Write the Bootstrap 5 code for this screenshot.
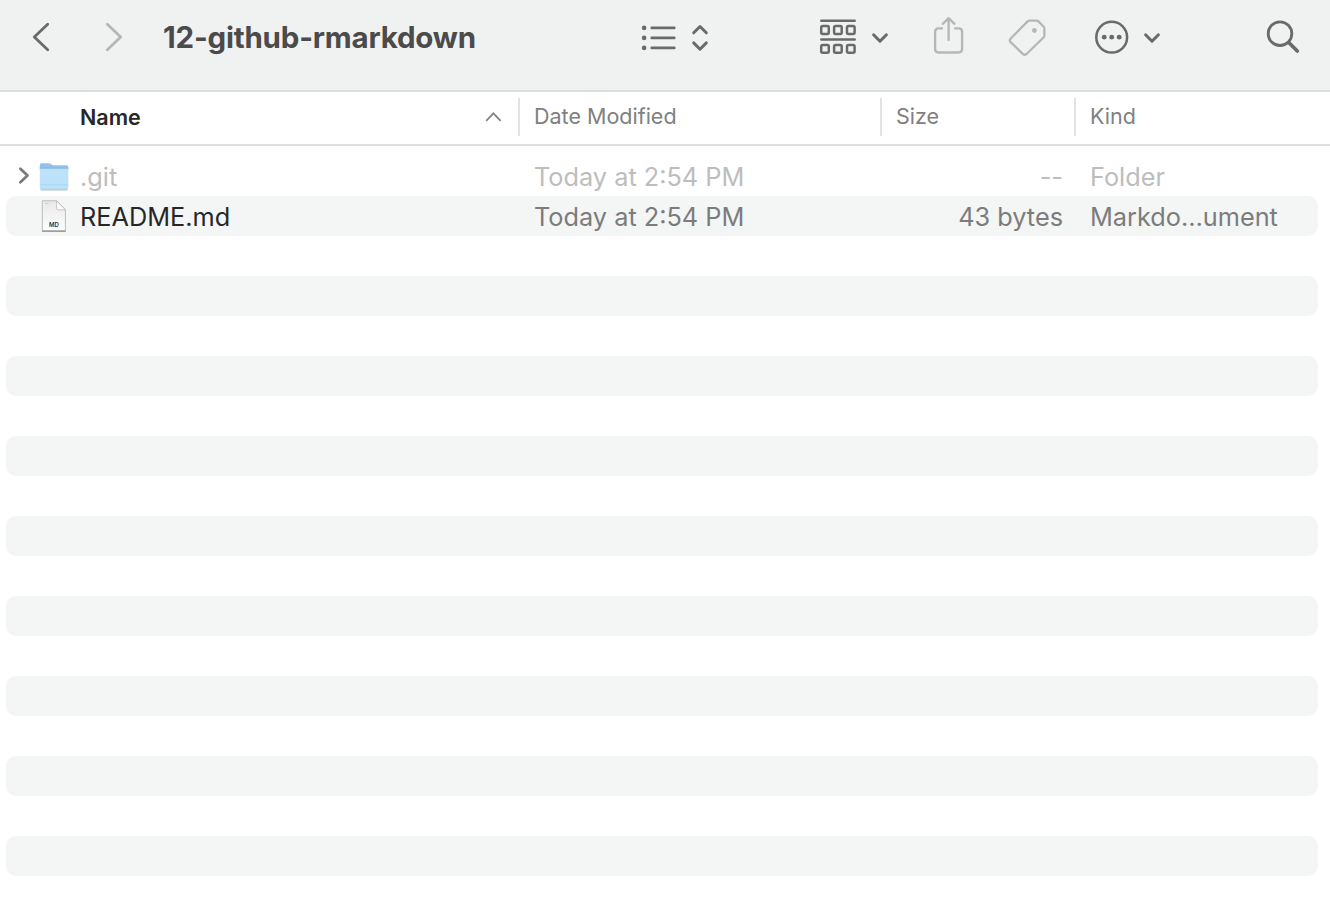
<!DOCTYPE html>
<html lang="en">
<head>
<meta charset="utf-8">
<meta name="viewport" content="width=device-width, initial-scale=1">
<title>12-github-rmarkdown</title>
<link href="https://cdn.jsdelivr.net/npm/bootstrap@5.3.0/dist/css/bootstrap.min.css" rel="stylesheet">
<style>
body{font-family:Inter,"Liberation Sans",sans-serif;height:898px;overflow:hidden;background:#fff;color:#272727}
.toolbar{height:92px;background:#f0f2f1;border-bottom:2px solid #dcdddd;padding-bottom:16px!important}
.tool{height:74px;color:#696a6a;background:none;border:0;padding:0;flex:none}
.tool svg{display:block;fill:none;stroke:currentColor;stroke-width:2.8;stroke-linecap:round;stroke-linejoin:round}
.tool.dim{color:#b5b6b6}
.title{width:459px;padding-left:12px;font-size:29.5px;font-weight:700;color:#4b4b4b;letter-spacing:-.2px;line-height:74px;margin:0}
.cols{display:grid;grid-template-columns:518px 362px 194px 1fr}
.heads{height:54px;border-bottom:2px solid #dfdfdf;padding-top:6px;font-size:21.5px;color:#808080}
.heads>div{height:38px;line-height:37px;padding-left:14px}
.heads>div+div{border-left:2px solid #e3e3e3}
.heads>.first{padding-left:80px;padding-right:16px;font-weight:600;color:#272727}
.list{padding:10px 12px 0 6px}
.item{height:40px;border-radius:10px;font-size:25.3px;line-height:41px;color:#7c7c7c;grid-template-columns:512px 362px 194px 1fr;white-space:nowrap}
.item:nth-child(even){background:#f4f5f5}
.item>div+div{padding-left:16px}
.item>.size{text-align:right;padding-right:11px}
.fname{color:#272727}
.faded,.faded .fname{color:#bdbdbd}
.lead-icons{width:74px;height:40px;flex:none}
.mdlabel{font:600 6px Inter,sans-serif;fill:#333}
</style>
</head>
<body>
<header class="toolbar d-flex align-items-start">
  <button class="tool" aria-label="Back"><svg width="80" height="74" viewBox="0 0 80 74"><path d="M47.7 24.2 34.3 37 47.7 49.7"/></svg></button>
  <button class="tool dim" aria-label="Forward"><svg width="71" height="74" viewBox="80 0 71 74"><path d="M107.3 24.2 120.7 37 107.3 49.7"/></svg></button>
  <h1 class="title" id="title"><span id="t0">12-github-rmarkdown</span></h1>
  <button class="tool" aria-label="List view"><svg width="140" height="74" viewBox="610 0 140 74"><g stroke-width="2.6"><path d="M651.7 27.9H674.3M651.7 37.9H674.3M651.7 47.9H674.3"/></g><g fill="currentColor" stroke="none"><circle cx="644.1" cy="27.9" r="2.3"/><circle cx="644.1" cy="37.9" r="2.3"/><circle cx="644.1" cy="47.9" r="2.3"/></g><path stroke-width="3" d="M693.7 32.8 700 26.5 706.3 32.8M693.7 42.9 700 49.2 706.3 42.9"/></svg></button>
  <button class="tool" aria-label="Group"><svg width="160" height="74" viewBox="750 0 160 74"><path stroke-width="2.5" d="M821.3 20.7H854.7M821.3 39.6H854.7"/><g stroke-width="2.5"><rect x="821.2" y="26.1" width="7.6" height="7.8" rx="1.5"/><rect x="834.1" y="26.1" width="7.6" height="7.8" rx="1.5"/><rect x="847" y="26.1" width="7.6" height="7.8" rx="1.5"/><rect x="821.2" y="45" width="7.6" height="7.8" rx="1.5"/><rect x="834.1" y="45" width="7.6" height="7.8" rx="1.5"/><rect x="847" y="45" width="7.6" height="7.8" rx="1.5"/></g><path stroke-width="3" d="M873.6 34.8 880 41.2 886.4 34.8"/></svg></button>
  <button class="tool dim" aria-label="Share"><svg width="75" height="74" viewBox="910 0 75 74"><g stroke-width="2.3"><path d="M943 28.4H938.6Q935.1 28.4 935.1 31.9V49Q935.1 52.5 938.6 52.5H958.6Q962.1 52.5 962.1 49V31.9Q962.1 28.4 958.6 28.4H954.2" stroke-linecap="butt"/><path d="M948.6 40V18.5M942.7 23.8 948.6 18.2 954.5 23.8"/></g></svg></button>
  <button class="tool dim" aria-label="Tags"><svg width="85" height="74" viewBox="985 0 85 74"><path stroke-width="2.3" d="M1027.6 21.4Q1028.4 20.7 1029.6 20.7H1036.5Q1037.8 20.7 1038.7 21.6L1043.5 26.5Q1044.4 27.4 1044.4 28.6V35.4Q1044.4 36.6 1043.5 37.5L1026.5 54Q1024.6 55.6 1022.8 53.9L1010.6 42.1Q1009 40.4 1010.6 38.7Z"/><circle cx="1034.4" cy="30.5" r="2.4" fill="currentColor" stroke="none"/></svg></button>
  <button class="tool" aria-label="More"><svg width="150" height="74" viewBox="1070 0 150 74"><circle cx="1111.7" cy="37.2" r="15.4" stroke-width="2.5"/><g fill="currentColor" stroke="none"><circle cx="1104.2" cy="37.2" r="2.4"/><circle cx="1111.7" cy="37.2" r="2.4"/><circle cx="1119.2" cy="37.2" r="2.4"/></g><path stroke-width="3" d="M1145.6 34.8 1152 41.2 1158.4 34.8"/></svg></button>
  <button class="tool" aria-label="Search"><svg width="110" height="74" viewBox="1220 0 110 74"><circle cx="1280" cy="33.7" r="11.8"/><path stroke-width="3.6" d="M1289 42.7 1297.3 51"/></svg></button>
</header>
<div class="heads cols">
  <div class="first d-flex justify-content-between align-items-center"><span>Name</span><svg width="18" height="12" viewBox="484 112 18 12" fill="none" stroke="#858585" stroke-width="1.8"><path d="M486.2 121.8 493.4 114.4 500.6 121.8"/></svg></div>
  <div>Date Modified</div><div>Size</div><div>Kind</div>
</div>
<main class="list">
  <div class="item cols faded">
    <div class="d-flex"><svg class="lead-icons" viewBox="6 156 74 40">
      <defs><linearGradient id="fold" x2="0" y2="1"><stop offset="0" stop-color="#bfe2fa"/><stop offset="1" stop-color="#b9e2fb"/></linearGradient></defs>
      <path d="M20.4 168.8 27.5 175.5 20.4 182.2" fill="none" stroke="#7b7b7b" stroke-width="2.8" stroke-linecap="round" stroke-linejoin="round"/>
      <path d="M40.5 190.3H67.5" stroke="#d5d9dc" stroke-width="1"/>
      <path d="M39.8 165Q39.8 163.2 41.6 163.2H48.6C51 163.2 51.3 165.3 53.5 165.3H66.5Q68.3 165.3 68.3 167V170H39.8Z" fill="#92c3ea"/>
      <path d="M39.8 168.5H68.3V187.7Q68.3 189.6 66.4 189.6H41.7Q39.8 189.6 39.8 187.7Z" fill="url(#fold)"/>
      <path d="M39.8 168H68.3" stroke="#84b4da"/><path d="M40 184.8H68" stroke="#a7d1ed" stroke-width=".8"/><path d="M40.5 189.3H67.5" stroke="#97c2df" stroke-width=".8"/>
    </svg><span class="fname">.git</span></div>
    <div><span>Today at 2:54 PM</span></div><div class="size">--</div><div>Folder</div>
  </div>
  <div class="item cols">
    <div class="d-flex"><svg class="lead-icons" viewBox="6 196 74 40">
      <defs><linearGradient id="sheet" x2="0" y2="1"><stop offset="0" stop-color="#e9e9e9"/><stop offset="1" stop-color="#fdfdfd"/></linearGradient></defs>
      <path d="M42.3 200.8H56.8L65.4 209.8V230.8H42.3Z" fill="url(#sheet)" stroke="#bcbcbc" stroke-width="1"/>
      <path d="M42 231.2H65.8" stroke="#8c8c8c" stroke-width="1.2"/>
      <path d="M56.6 201V208.3Q56.6 209.8 58.2 209.8H65.4Z" fill="#fff" stroke="#b9b9b9" stroke-width=".8"/>
      <path d="M45 203.4H48.5" stroke="#c2c2c2" stroke-width=".8"/>
      <text class="mdlabel" x="53.9" y="227" text-anchor="middle">MD</text>
    </svg><span class="fname">README.md</span></div>
    <div><span>Today at 2:54 PM</span></div><div class="size">43 bytes</div><div>Markdo…ument</div>
  </div>
  <div class="item"></div><div class="item"></div><div class="item"></div><div class="item"></div>
  <div class="item"></div><div class="item"></div><div class="item"></div><div class="item"></div>
  <div class="item"></div><div class="item"></div><div class="item"></div><div class="item"></div>
  <div class="item"></div><div class="item"></div><div class="item"></div><div class="item"></div>
</main>
<script src="https://cdn.jsdelivr.net/npm/bootstrap@5.3.0/dist/js/bootstrap.bundle.min.js"></script>
</body>
</html>
